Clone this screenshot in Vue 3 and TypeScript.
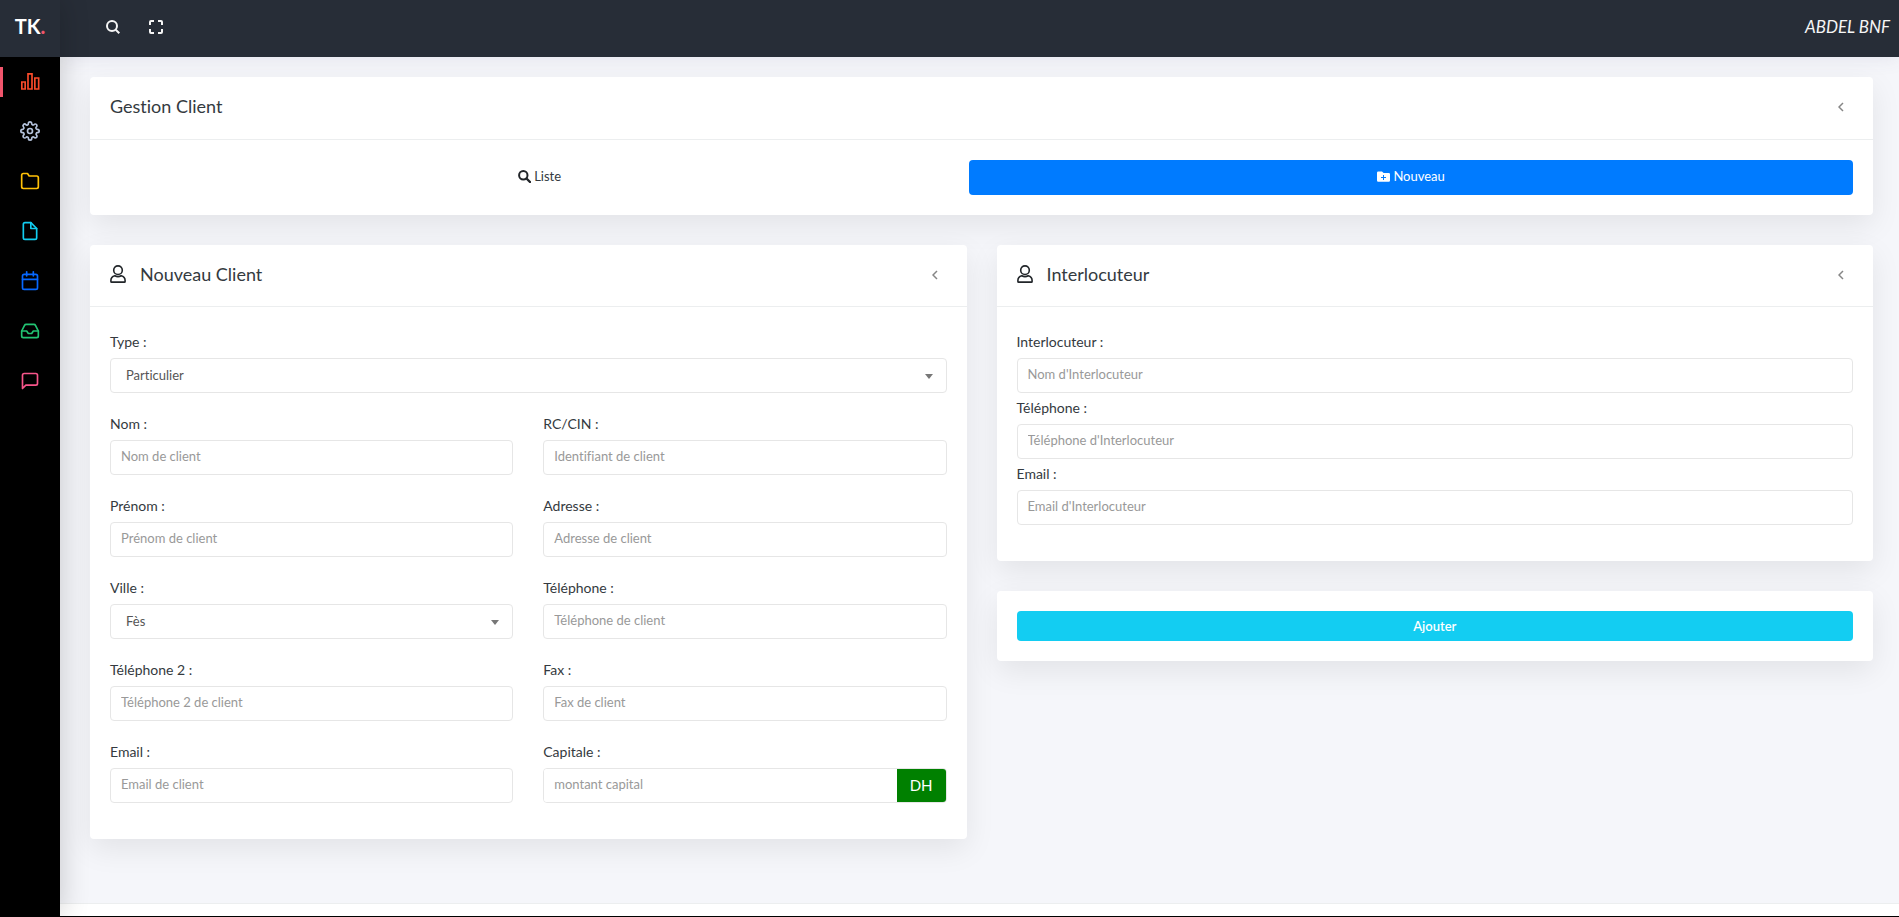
<script setup lang="ts">
import { reactive, ref } from 'vue'

interface Field {
  id: string
  label: string
  placeholder?: string
  options?: string[]
  wide?: boolean
  suffix?: string
  type?: string
}

interface NavItem {
  label: string
  color: string
  paths: string[]
  active?: boolean
}

const navItems: NavItem[] = [
  { label: 'Tableau de bord', color: '#fa4b2a', active: true, paths: ['M2.200 13.200h4v8.400h-4z', 'M9.600 3.400h4.800v18.200H9.600z', 'M17.800 8.400h4.600v13.200h-4.600z'] },
  {
    label: 'Paramètres',
    color: '#b5c3dc',
    paths: [
      'M15 12a3 3 0 1 1-6 0 3 3 0 0 1 6 0z',
      'M19.4 15a1.65 1.65 0 0 0 .33 1.82l.06.06a2 2 0 1 1-2.83 2.83l-.06-.06a1.65 1.65 0 0 0-2.8 1.17V21a2 2 0 1 1-4 0v-.09A1.65 1.65 0 0 0 7.18 19.73l-.06.06a2 2 0 1 1-2.83-2.83l.06-.06A1.65 1.65 0 0 0 3.09 14H3a2 2 0 1 1 0-4h.09A1.65 1.65 0 0 0 4.27 7.18l-.06-.06a2 2 0 1 1 2.83-2.83l.06.06A1.65 1.65 0 0 0 10 3.09V3a2 2 0 1 1 4 0v.09a1.65 1.65 0 0 0 2.82 1.18l.06-.06a2 2 0 1 1 2.83 2.83l-.06.06A1.65 1.65 0 0 0 20.91 10H21a2 2 0 1 1 0 4h-.09a1.65 1.65 0 0 0-1.51 1z',
    ],
  },
  { label: 'Dossiers', color: '#ffc107', paths: ['M22 19a2 2 0 0 1-2 2H4a2 2 0 0 1-2-2V5a2 2 0 0 1 2-2h5l2 3h9a2 2 0 0 1 2 2z'] },
  { label: 'Documents', color: '#12cdf0', paths: ['M13 2H6a2 2 0 0 0-2 2v16a2 2 0 0 0 2 2h12a2 2 0 0 0 2-2V9z', 'M13 2v7h7'] },
  { label: 'Calendrier', color: '#0668ff', paths: ['M5 4h14a2 2 0 0 1 2 2v14a2 2 0 0 1-2 2H5a2 2 0 0 1-2-2V6a2 2 0 0 1 2-2z', 'M16 1v5', 'M8 1v5', 'M3 10h18'] },
  {
    label: 'Boîte de réception',
    color: '#22c473',
    paths: ['M22 12h-6l-2 3h-4l-2-3H2', 'M5.45 5.11 2 12v6a2 2 0 0 0 2 2h16a2 2 0 0 0 2-2v-6l-3.45-6.89A2 2 0 0 0 16.76 4H7.24a2 2 0 0 0-1.79 1.11z'],
  },
  { label: 'Messages', color: '#f7558a', paths: ['M21 15a2 2 0 0 1-2 2H7l-4 4V5a2 2 0 0 1 2-2h14a2 2 0 0 1 2 2z'] },
]

const clientFields: Field[] = [
  { id: 'type', label: 'Type :', options: ['Particulier', 'Société'], wide: true },
  { id: 'nom', label: 'Nom :', placeholder: 'Nom de client' },
  { id: 'rc', label: 'RC/CIN :', placeholder: 'Identifiant de client' },
  { id: 'prenom', label: 'Prénom :', placeholder: 'Prénom de client' },
  { id: 'adresse', label: 'Adresse :', placeholder: 'Adresse de client' },
  { id: 'ville', label: 'Ville :', options: ['Fès', 'Rabat', 'Casablanca'] },
  { id: 'tel', label: 'Téléphone :', placeholder: 'Téléphone de client', type: 'tel' },
  { id: 'tel2', label: 'Téléphone 2 :', placeholder: 'Téléphone 2 de client', type: 'tel' },
  { id: 'fax', label: 'Fax :', placeholder: 'Fax de client', type: 'tel' },
  { id: 'email', label: 'Email :', placeholder: 'Email de client', type: 'email' },
  { id: 'capital', label: 'Capitale :', placeholder: 'montant capital', suffix: 'DH' },
]

const contactFields: Field[] = [
  { id: 'contact-nom', label: 'Interlocuteur :', placeholder: "Nom d'Interlocuteur" },
  { id: 'contact-tel', label: 'Téléphone :', placeholder: "Téléphone d'Interlocuteur", type: 'tel' },
  { id: 'contact-email', label: 'Email :', placeholder: "Email d'Interlocuteur", type: 'email' },
]

const values = reactive<Record<string, string>>({ type: 'Particulier', ville: 'Fès' })
const open = reactive({ gestion: true, client: true, contact: true })
const tab = ref<'liste' | 'nouveau'>('nouveau')
</script>

<template>
  <div class="layout">
    <aside class="sidebar">
      <a class="logo" href="#">TK<span class="dot">.</span></a>
      <nav class="nav" aria-label="Menu principal">
        <a v-for="item in navItems" :key="item.label" class="nav-link" :class="{ active: item.active }" href="#" :aria-label="item.label">
          <svg class="icon" viewBox="0 0 24 24" :style="{ color: item.color }">
            <path v-for="d in item.paths" :key="d" :d="d" />
          </svg>
        </a>
      </nav>
    </aside>

    <div class="page">
      <header class="topbar">
        <div class="tools">
          <button class="tool" type="button" aria-label="Rechercher">
            <svg viewBox="0 0 14 14"><circle cx="6" cy="6" r="5" /><path d="m9.700 9.700 3.600 3.600" /></svg>
          </button>
          <button class="tool" type="button" aria-label="Plein écran">
            <svg viewBox="0 0 14 14"><path d="M1 5V2a1 1 0 0 1 1-1h3M9 1h3a1 1 0 0 1 1 1v3M13 9v3a1 1 0 0 1-1 1H9M5 13H2a1 1 0 0 1-1-1V9" /></svg>
          </button>
        </div>
        <a class="user" href="#">ABDEL BNF</a>
      </header>

      <main class="content">
        <section class="card">
          <div class="card-head main">
            <h1 class="title">Gestion Client</h1>
            <button class="collapse" type="button" aria-label="Réduire Gestion Client" @click="open.gestion = !open.gestion">
              <svg viewBox="0 0 6 10"><path d="M5 1 1 5l4 4" /></svg>
            </button>
          </div>
          <div v-show="open.gestion" class="tabs">
            <button class="tab" :class="{ on: tab === 'liste' }" type="button" @click="tab = 'liste'">
              <svg class="tab-icon" viewBox="0 0 13 13"><circle cx="5.300" cy="5.300" r="4.200" fill="none" stroke="currentColor" stroke-width="2" /><path d="m8.500 8.500 3.500 3.500" fill="none" stroke="currentColor" stroke-width="2.400" stroke-linecap="round" /></svg>
              Liste
            </button>
            <button class="tab" :class="{ on: tab === 'nouveau' }" type="button" @click="tab = 'nouveau'">
              <svg class="tab-icon" viewBox="0 0 13 13"><path fill="currentColor" fill-rule="evenodd" d="M1.200 1.500H5l1.600 1.600h5.200a1.200 1.200 0 0 1 1.200 1.200v6.200a1.200 1.200 0 0 1-1.200 1.200H1.200A1.200 1.200 0 0 1 0 10.500V2.700a1.200 1.200 0 0 1 1.200-1.200zM6 5v2H4v1h2v2h1V8h2V7H7V5z" /></svg>
              Nouveau
            </button>
          </div>
        </section>

        <form class="columns" @submit.prevent>
          <section class="card">
            <div class="card-head">
              <svg class="person" viewBox="0 0 16 18"><circle cx="8" cy="5.200" r="4.300" /><path d="M4.800 10.700C2.400 11.300.9 13 .9 15.400v1c0 .5.200.7.700.7h12.800c.5 0 .7-.2.700-.7v-1c0-2.400-1.500-4.100-3.900-4.700-1.900 1.100-4.500 1.100-6.400 0z" /></svg>
              <h2 class="title">Nouveau Client</h2>
              <button class="collapse" type="button" aria-label="Réduire Nouveau Client" @click="open.client = !open.client">
                <svg viewBox="0 0 6 10"><path d="M5 1 1 5l4 4" /></svg>
              </button>
            </div>
            <div v-show="open.client" class="fields two">
              <div v-for="f in clientFields" :key="f.id" class="field" :class="{ wide: f.wide }">
                <label class="label" :for="f.id">{{ f.label }}</label>
                <div v-if="f.options" class="select-wrap">
                  <select :id="f.id" v-model="values[f.id]" class="control select">
                    <option v-for="o in f.options" :key="o">{{ o }}</option>
                  </select>
                  <span class="caret"></span>
                </div>
                <div v-else-if="f.suffix" class="group">
                  <input :id="f.id" v-model="values[f.id]" class="group-input" type="text" :placeholder="f.placeholder" />
                  <span class="suffix">{{ f.suffix }}</span>
                </div>
                <input v-else :id="f.id" v-model="values[f.id]" class="control" :type="f.type ?? 'text'" :placeholder="f.placeholder" />
              </div>
            </div>
          </section>

          <div class="side">
            <section class="card">
              <div class="card-head">
                <svg class="person" viewBox="0 0 16 18"><circle cx="8" cy="5.200" r="4.300" /><path d="M4.800 10.700C2.400 11.300.9 13 .9 15.400v1c0 .5.200.7.700.7h12.800c.5 0 .7-.2.700-.7v-1c0-2.400-1.500-4.100-3.900-4.700-1.900 1.100-4.500 1.100-6.400 0z" /></svg>
                <h2 class="title">Interlocuteur</h2>
                <button class="collapse" type="button" aria-label="Réduire Interlocuteur" @click="open.contact = !open.contact">
                  <svg viewBox="0 0 6 10"><path d="M5 1 1 5l4 4" /></svg>
                </button>
              </div>
              <div v-show="open.contact" class="fields">
                <div v-for="f in contactFields" :key="f.id" class="field">
                  <label class="label" :for="f.id">{{ f.label }}</label>
                  <input :id="f.id" v-model="values[f.id]" class="control" :type="f.type ?? 'text'" :placeholder="f.placeholder" />
                </div>
              </div>
            </section>
            <section class="card submit-card">
              <button class="submit" type="submit">Ajouter</button>
            </section>
          </div>
        </form>
      </main>

      <footer class="footer"></footer>
    </div>
  </div>
</template>

<style>
body {
  margin: 0;
}
</style>

<style scoped>
.layout {
  display: flex;
  box-sizing: border-box;
  min-height: 100vh;
  border-bottom: 1px solid #000;
  background: #f5f6fa;
  color: #343a40;
  font: 14px/21px Lato, "Liberation Sans", sans-serif;
  font-variant-ligatures: none;
}

.layout *,
.layout *::before {
  box-sizing: border-box;
}

button,
input,
select {
  margin: 0;
  padding: 0;
  border: 0;
  font: inherit;
  font-variant-ligatures: none;
  color: inherit;
}

button {
  cursor: pointer;
}

a {
  text-decoration: none;
}

.sidebar {
  position: relative;
  z-index: 1;
  flex: none;
  width: 60px;
  background: #000;
  box-shadow: 0 0 30px rgba(0, 0, 0, 0.2);
}

.logo {
  display: flex;
  align-items: center;
  justify-content: center;
  height: 57px;
  padding-bottom: 4px;
  background: #272d37;
  color: #fff;
  font-size: 20px;
  font-weight: 700;
}

.dot {
  color: #f1556c;
  font-weight: 900;
}

.nav-link {
  display: flex;
  align-items: center;
  justify-content: center;
  height: 50px;
  padding-bottom: 2px;
}

.nav-link.active {
  position: relative;
}

.nav-link.active .icon {
  stroke-linejoin: miter;
}

.nav-link.active::before {
  content: "";
  position: absolute;
  top: 10px;
  left: 0;
  width: 3px;
  height: 30px;
  background: #f1556c;
}

.icon {
  width: 20px;
  height: 20px;
  fill: none;
  stroke: currentColor;
  stroke-width: 2;
  stroke-linecap: round;
  stroke-linejoin: round;
}

.page {
  display: flex;
  flex: 1;
  flex-direction: column;
  min-width: 0;
}

.topbar {
  display: flex;
  align-items: center;
  justify-content: space-between;
  height: 57px;
  padding: 0 9px 3px 46px;
  background: #272d37;
  box-shadow: 0 0 20px rgba(80, 70, 120, 0.12);
}

.tools {
  display: flex;
  gap: 29px;
}

.tool {
  display: flex;
  width: 14px;
  height: 14px;
  background: none;
}

.tool svg {
  width: 14px;
  height: 14px;
  overflow: visible;
  fill: none;
  stroke: #f5f5f5;
  stroke-width: 2;
}

.user {
  padding-bottom: 2px;
  color: #f5f5f5;
  font-size: 17px;
  font-style: italic;
}

.content {
  display: flex;
  flex: 1;
  flex-direction: column;
  gap: 30px;
  padding: 20px 26px 64px 30px;
}

.columns {
  display: grid;
  grid-template-columns: 1fr 1fr;
  gap: 30px;
  align-items: start;
}

.side {
  display: grid;
  gap: 30px;
}

.card {
  border-radius: 4px;
  background: #fff;
  box-shadow: 0 10px 30px rgba(0, 0, 0, 0.08);
}

.card-head {
  display: flex;
  align-items: center;
  height: 62px;
  padding: 0 29px 4px 20px;
  border-bottom: 1px solid #eceeef;
}

.card-head.main {
  height: 63px;
}

.person {
  flex: none;
  width: 16px;
  height: 18px;
  margin-right: 14px;
  fill: none;
  stroke: #212529;
  stroke-width: 1.600;
}

.title {
  margin: 0;
  font-size: 18px;
  font-weight: 400;
  line-height: 24px;
}

.collapse {
  display: flex;
  margin-left: auto;
  padding-top: 2px;
  background: none;
}

.collapse svg {
  width: 6px;
  height: 10px;
  fill: none;
  stroke: #868686;
  stroke-width: 1.500;
}

.tabs {
  display: flex;
  padding: 20px;
}

.tab {
  display: flex;
  flex: 1 1 auto;
  align-items: center;
  justify-content: center;
  gap: 3px;
  height: 35px;
  padding-bottom: 2px;
  border-radius: 4px;
  background: none;
  font-size: 13px;
}

.tab.on {
  background: #007bff;
  color: #fff;
}

.tab-icon {
  width: 13px;
  height: 13px;
}

.tab:not(.on) .tab-icon {
  color: #212529;
}

.fields {
  display: grid;
  padding: 20px 20px 36px;
}

.two {
  grid-template-columns: 1fr 1fr;
  gap: 16px 30px;
}

.wide {
  grid-column: 1 / -1;
}

.field {
  min-width: 0;
}

.label {
  display: block;
  height: 31px;
  padding-top: 4px;
}

.control {
  display: block;
  width: 100%;
  height: 35px;
  padding: 0 10px 3px;
  border: 1px solid #e6e6e6;
  border-radius: 4px;
  background: #fff;
  color: #555;
  font-size: 13px;
}

.control::placeholder,
.group-input::placeholder {
  color: #999;
  opacity: 1;
}

.select-wrap {
  position: relative;
}

.select {
  appearance: none;
  padding: 0 30px 0 15px;
}

.caret {
  position: absolute;
  top: 16px;
  right: 14px;
  border: 4px solid transparent;
  border-top: 5px solid #777;
  border-bottom: 0;
  pointer-events: none;
}

.group {
  display: flex;
  height: 35px;
  overflow: hidden;
  border: 1px solid #e6e6e6;
  border-radius: 4px;
}

.group-input {
  flex: 1;
  min-width: 0;
  padding: 0 10px 3px;
  color: #555;
  font-size: 13px;
}

.suffix {
  display: flex;
  align-items: center;
  padding: 0 13px 1px;
  background: #008000;
  color: #fff;
  font-size: 15px;
}

.submit-card {
  padding: 20px;
}

.submit {
  display: block;
  width: 100%;
  height: 30px;
  border-radius: 4px;
  background: #13cdf2;
  color: #fff;
  font-size: 13px;
  font-weight: 600;
}

.footer {
  flex: none;
  height: 13px;
  border-top: 1px solid #eceeef;
  background: #fff;
}
</style>
